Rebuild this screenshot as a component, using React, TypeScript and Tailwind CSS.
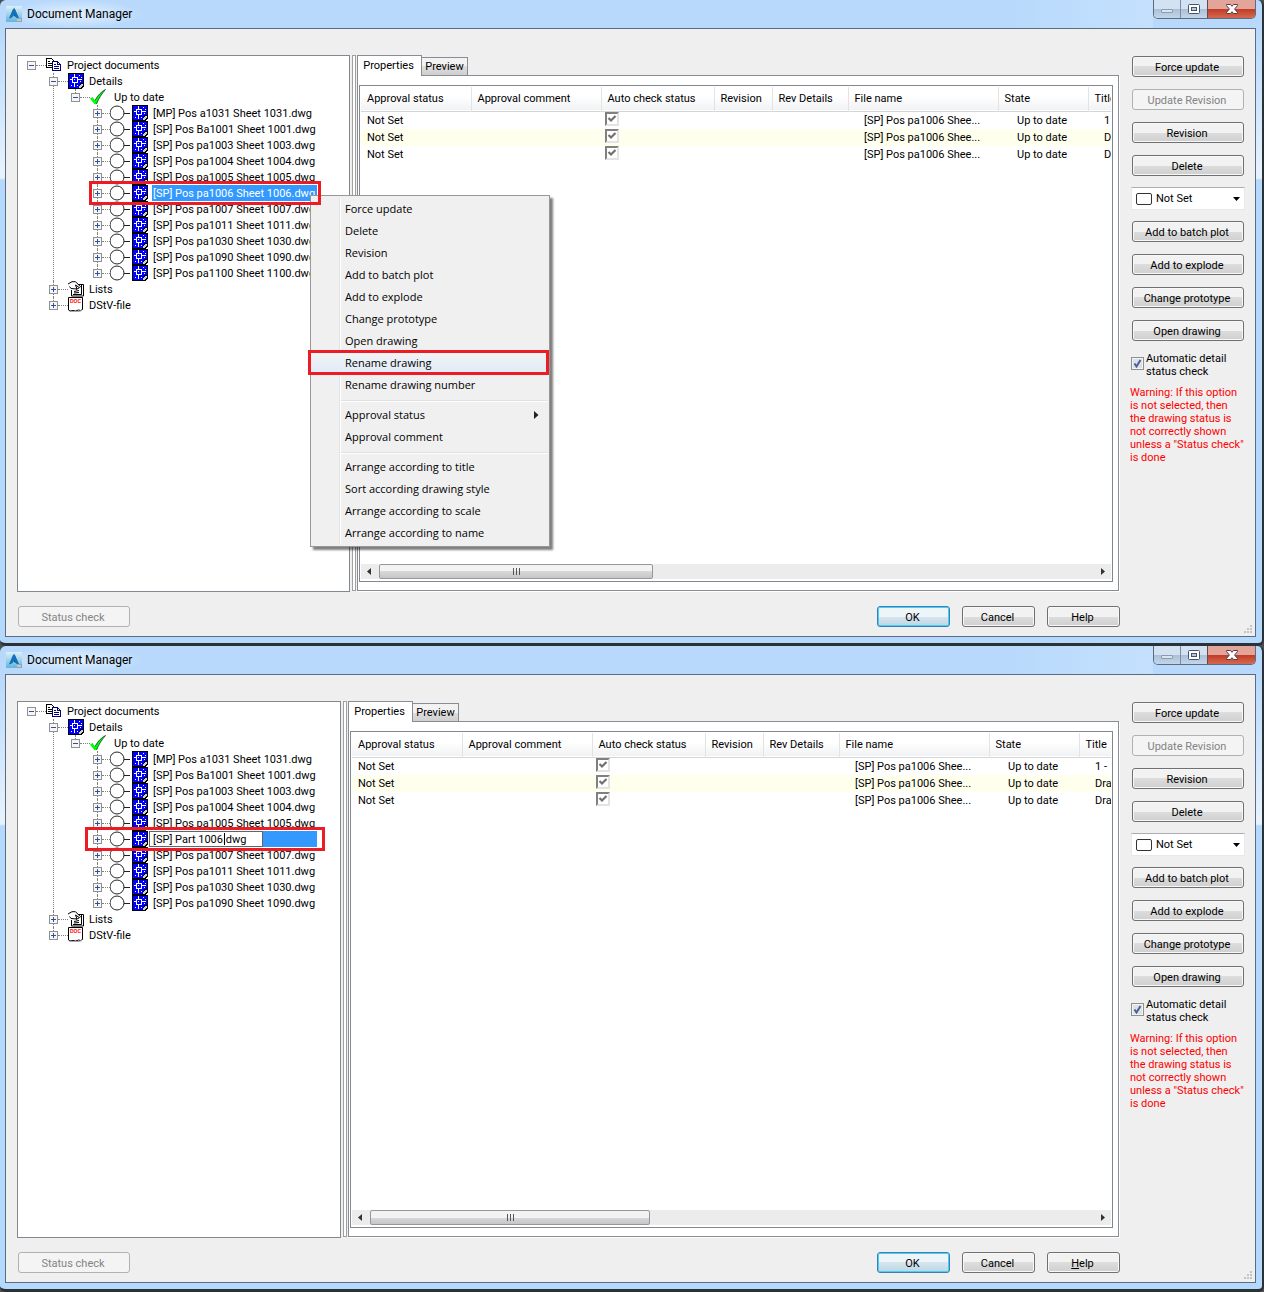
import type { ReactNode } from 'react';

/* ── Data ── */

const sheets = [
  '[MP] Pos a1031 Sheet 1031.dwg',
  '[SP] Pos Ba1001 Sheet 1001.dwg',
  '[SP] Pos pa1003 Sheet 1003.dwg',
  '[SP] Pos pa1004 Sheet 1004.dwg',
  '[SP] Pos pa1005 Sheet 1005.dwg',
  '[SP] Pos pa1006 Sheet 1006.dwg',
  '[SP] Pos pa1007 Sheet 1007.dwg',
  '[SP] Pos pa1011 Sheet 1011.dwg',
  '[SP] Pos pa1030 Sheet 1030.dwg',
  '[SP] Pos pa1090 Sheet 1090.dwg',
  '[SP] Pos pa1100 Sheet 1100.dwg',
];

const SELECTED = 5;

const menuGroups = [
  [
    'Force update',
    'Delete',
    'Revision',
    'Add to batch plot',
    'Add to explode',
    'Change prototype',
    'Open drawing',
    'Rename drawing',
    'Rename drawing number',
  ],
  ['Approval status', 'Approval comment'],
  [
    'Arrange according to title',
    'Sort according drawing style',
    'Arrange according to scale',
    'Arrange according to name',
  ],
];

const columns = [
  { label: 'Approval status', width: 'w-[110px]' },
  { label: 'Approval comment', width: 'w-[130px]' },
  { label: 'Auto check status', width: 'w-[113px]' },
  { label: 'Revision', width: 'w-[58px]' },
  { label: 'Rev Details', width: 'w-[76px]' },
  { label: 'File name', width: 'w-[150px]' },
  { label: 'State', width: 'w-[90px]' },
  { label: 'Title', width: '' },
];

const warning =
  'Warning: If this option\nis not selected, then\nthe drawing status is\nnot correctly shown\nunless a "Status check"\nis done';

/* ── Icons ── */

function AppIcon() {
  return (
    <svg width="16" height="16" viewBox="0 0 16 16" aria-hidden="true">
      <defs>
        <linearGradient id="app-bg" x1="0" y1="0" x2="0" y2="1">
          <stop offset="0" stopColor="#dff0f8" />
          <stop offset="1" stopColor="#62b4dc" />
        </linearGradient>
      </defs>
      <rect width="16" height="16" fill="url(#app-bg)" />
      <path d="M8 1.5 3 12.500 8 10Z" fill="#1f8fd0" />
      <path d="M8 1.5 13 12.500 8 10Z" fill="#0b5a9c" />
      <path d="M7 3h2l4 9.500-3-1-2-4-2 4-3 1Z" fill="#1272b8" />
      <rect x="11" y="12" width="5" height="4" fill="#8fa6b4" />
      <path d="M12 13v2M14 13v2" stroke="#fff" strokeWidth=".8" />
    </svg>
  );
}

function DrawingIcon() {
  return (
    <svg className="shrink-0" width="16" height="16" viewBox="0 0 16 16" shapeRendering="crispEdges" aria-hidden="true">
      <rect width="16" height="16" fill="#000" />
      <path d="M1 1h14v9h-3v2h-1v3H1Z" fill="#00f" />
      <path d="M4 4h6v6H4ZM5 5v4h4V5Z" fill="#fff" fillRule="evenodd" />
      <path d="M6 1h1v3H6ZM6 10h1v4H6ZM2 6h2v1H2ZM10 6h4v1h-4Z" fill="#fff" />
      <path d="M6 6h1v1H6ZM11 2h1v1h-1ZM13 4h1v1h-1ZM3 12h1v1H3ZM9 12h1v1H9ZM12 8h1v1h-1Z" fill="#fff" />
      <path d="M12 12h1v-1h2v1l-3 3h-1v-2h1Z" fill="#d0d0d0" />
      <path d="M15 14h1v2h-2v-1h1Z" fill="#fff" />
    </svg>
  );
}

function DocumentsIcon() {
  return (
    <svg className="shrink-0" width="16" height="16" viewBox="0 0 16 16" shapeRendering="crispEdges" aria-hidden="true">
      <path d="M.5 1.5h5l2 2v7h-7Z" fill="#fff" stroke="#000" />
      <path d="M2 4.500h2M2 6.500h4M2 8.500h4" stroke="#000" />
      <path d="M6.500 4.500h5l3 3v6h-8Z" fill="#fff" stroke="#00007b" />
      <path d="M11.500 4.500v3h3M8 7.500h2M8 9.500h5M8 11.500h5" fill="none" stroke="#00007b" />
    </svg>
  );
}

function CheckIcon() {
  return (
    <svg className="-mr-px shrink-0" width="20" height="16" viewBox="0 0 20 16" aria-hidden="true">
      <path d="M0 9.500 2.500 8 5 11.500C8 6 11 3 15.500.5 11.500 5 9 9 6.500 15L4.500 15.200Z" fill="#0f0" />
      <path d="M5 11.500C8 6 11 3 15.500.5 11.500 5 9 9 6.500 15" fill="none" stroke="#042" strokeWidth=".8" />
    </svg>
  );
}

function ListsIcon() {
  return (
    <svg className="shrink-0" width="16" height="16" viewBox="0 0 16 16" aria-hidden="true">
      <path d="M6 3.500h9.500v11.500H3.500V9" fill="#fff" stroke="#000" />
      <path d="M13.500 4v9.500M5 13.500h8.500" stroke="#000" fill="none" />
      <path d="M0 3 4 .7h3.500l5 5-1 1L7.500 4 9 8 3 7.500 1.500 5.500" fill="#fff" stroke="#000" />
      <path d="M8 8.500 11 7M6 10.500l5-1M6 12l5-.5" stroke="#000" />
    </svg>
  );
}

function DocIcon() {
  return (
    <svg className="shrink-0" width="16" height="16" viewBox="0 0 16 16" aria-hidden="true">
      <path d="M.5.5h14v12l-2 1-2-.5-3 1-2.500-.5-3 .5-1.500-1Z" fill="#fff" stroke="#000" />
      <path d="M3 14.500h8l3-1" fill="none" stroke="#aaa" />
      <text x="7.500" y="6" textAnchor="middle" fontSize="5" fontWeight="700" fill="#f00" fontFamily="Liberation Sans, sans-serif">
        DOC
      </text>
    </svg>
  );
}

function StatusIcon() {
  return (
    <svg className="shrink-0" width="22" height="16" viewBox="0 0 22 16" aria-hidden="true">
      <circle cx="7" cy="8" r="7" fill="#fff" stroke="#222" />
      <path d="M14 8.500h6" stroke="#222" />
    </svg>
  );
}

/* ── Small controls ── */

function PushButton({ children, disabled, primary }: { children: ReactNode; disabled?: boolean; primary?: boolean }) {
  const look = disabled
    ? 'border-[#adb2b5] bg-[#f4f4f4] text-[#838383]'
    : primary
      ? 'border-[#3c7fb1] bg-linear-to-b from-[#eef5f9] from-50% via-[#d5e6ef] via-50% to-[#bed5e3] shadow-[inset_0_0_0_1px_#46d0f8]'
      : 'border-[#707070] bg-linear-to-b from-[#f2f2f2] from-50% via-[#dddddd] via-50% to-[#cfcfcf] shadow-[inset_0_0_0_1px_#f8f8f8]';
  return (
    <button type="button" disabled={disabled} className={`h-[21px] w-full rounded-[3px] border pt-px pr-0.5 leading-none ${look}`}>
      {children}
    </button>
  );
}

function Expander({ open, label }: { open?: boolean; label: string }) {
  return (
    <button type="button" aria-label={`Toggle ${label}`} className="relative size-[9px] shrink-0">
      <svg width="9" height="9" viewBox="0 0 9 9" shapeRendering="crispEdges" aria-hidden="true">
        <rect x=".5" y=".5" width="8" height="8" fill="#f6f6f6" stroke="#919191" />
        <path d={open ? 'M2 4.500h5' : 'M2 4.500h5M4.500 2v5'} stroke="#33509c" />
      </svg>
    </button>
  );
}

function GridCheckbox({ label }: { label: string }) {
  return (
    <span className="mb-0.5 grid size-[14px]">
      <input
        type="checkbox"
        defaultChecked
        aria-label={label}
        className="col-start-1 row-start-1 size-[14px] appearance-none border-2 border-t-[#808080] border-r-[#e3e3e3] border-b-[#e3e3e3] border-l-[#808080] bg-white"
      />
      <svg className="pointer-events-none col-start-1 row-start-1" width="14" height="14" viewBox="0 0 14 14" aria-hidden="true">
        <path d="m3.500 6 2.500 2.500L10.500 4" fill="none" stroke="#707070" strokeWidth="2.200" />
      </svg>
    </span>
  );
}

/* ── Tree ── */

function TreeItem({ icon, label, open, root, children }: { icon: ReactNode; label: string; open?: boolean; root?: boolean; children?: ReactNode }) {
  const line = root
    ? ''
    : 'before:absolute before:top-0 before:left-1 before:h-full before:border-l before:border-dotted before:border-[#808080] last:before:h-2';
  return (
    <li className={`relative ${line}`}>
      <div className="flex h-4 items-center">
        <Expander open={open} label={label} />
        <span className="w-[10px] shrink-0 border-t border-dotted border-[#808080]" />
        {icon}
        <span className="mt-0.5 ml-[5px]">{label}</span>
      </div>
      {children && <ul className="pl-[22px]">{children}</ul>}
    </li>
  );
}

function SheetItem({ name, selected, renaming }: { name: string; selected: boolean; renaming: boolean }) {
  return (
    <li className="relative before:absolute before:top-0 before:left-1 before:h-full before:border-l before:border-dotted before:border-[#808080] last:before:h-2">
      <div className="relative flex h-4 w-max items-center">
        <Expander label={name} />
        <span className="w-2 shrink-0 border-t border-dotted border-[#808080]" />
        <StatusIcon />
        <DrawingIcon />
        {selected && renaming && (
          <div className="relative ml-px flex h-4 w-[168px] bg-[#3399ff]">
            <input
              aria-label="Drawing name"
              defaultValue="[SP] Part 1006.dwg"
              className="h-4 w-[114px] border border-[#646464] bg-white px-[3px] pt-px outline-none"
            />
            <span className="absolute top-0.5 left-[75px] h-3 w-px bg-black" />
          </div>
        )}
        {selected && !renaming && (
          <span className="ml-1 h-4 w-[165px] bg-[#3399ff] pt-px pl-px text-white">{name}</span>
        )}
        {!selected && <span className="mt-0.5 ml-[5px]">{name}</span>}
        {selected && (
          <span
            className={`pointer-events-none absolute -inset-y-1 z-20 border-3 border-[#ed1c24] ${renaming ? '-inset-x-2' : '-inset-x-1'}`}
          />
        )}
        {selected && !renaming && <ContextMenu />}
      </div>
    </li>
  );
}

function DocumentTree({ renaming }: { renaming: boolean }) {
  const visible = renaming ? sheets.slice(0, -1) : sheets;
  return (
    <nav
      aria-label="Project documents"
      className={`shrink-0 border border-[#828790] bg-white pt-px pl-[9px] whitespace-nowrap ${renaming ? 'w-[324px]' : 'w-[333px]'}`}
    >
      <ul>
        <TreeItem root open icon={<DocumentsIcon />} label="Project documents">
          <TreeItem open icon={<DrawingIcon />} label="Details">
            <TreeItem open icon={<CheckIcon />} label="Up to date">
              {visible.map((name, i) => (
                <SheetItem key={name} name={name} selected={i === SELECTED} renaming={renaming} />
              ))}
            </TreeItem>
          </TreeItem>
          <TreeItem icon={<ListsIcon />} label="Lists" />
          <TreeItem icon={<DocIcon />} label="DStV-file" />
        </TreeItem>
      </ul>
    </nav>
  );
}

function ContextMenu() {
  return (
    <div
      role="menu"
      className="absolute top-[10px] left-[217px] z-10 w-[240px] border border-[#979797] bg-[#f0f0f0] py-0.5 font-['Open_Sans',sans-serif] shadow-[3px_3px_2px_rgba(0,0,0,0.5)]"
    >
      <div className="ml-[28px] border-l border-[#e2e3e3] shadow-[inset_1px_0_0_#fff]">
        {menuGroups.map((group, g) => (
          <div key={group[0]}>
            {g > 0 && <hr className="mt-1 mr-0.5 mb-0.5 ml-px h-0.5 border-t border-b border-t-[#e0e0e0] border-b-white" />}
            {group.map((item) => {
              const active = item === 'Rename drawing';
              return (
                <div key={item} className="relative">
                  {active && (
                    <span className="absolute -top-0.5 -bottom-px right-0 -left-8 border-3 border-[#ed1c24] bg-linear-to-b from-[#f2f4f6] to-[#e2ebf7]" />
                  )}
                  <button type="button" role="menuitem" className="relative flex h-[22px] w-full items-center pr-[10px] pl-[5px]">
                    <span>{item}</span>
                    {item === 'Approval status' && (
                      <svg className="ml-auto" width="5" height="8" viewBox="0 0 5 8" aria-hidden="true">
                        <path d="M0 0v8l4.500-4Z" fill="#222" />
                      </svg>
                    )}
                  </button>
                </div>
              );
            })}
          </div>
        ))}
      </div>
    </div>
  );
}

/* ── Properties list ── */

function PropertiesPanel({ renaming }: { renaming: boolean }) {
  const titles = renaming ? ['1 -', 'Dra', 'Dra'] : ['1', 'D', 'D'];
  return (
    <section className="ml-px flex min-w-0 flex-1 flex-col pb-px">
      <div role="tablist" className="flex items-end">
        <button
          type="button"
          role="tab"
          aria-selected="true"
          className="relative -mb-px h-[21px] w-[65px] border border-b-0 border-[#898c95] bg-white pr-0.5 text-center"
        >
          Properties
        </button>
        <button
          type="button"
          role="tab"
          aria-selected="false"
          className="h-[18px] w-[46px] border border-b-0 border-l-0 border-[#898c95] bg-linear-to-b from-[#f2f2f2] from-50% via-[#dddddd] via-50% to-[#cfcfcf] pt-px text-center"
        >
          Preview
        </button>
      </div>
      <div className="flex flex-1 border border-[#898c95] bg-white px-[5px] pt-[9px] pb-2 pl-px shadow-[1px_1px_0_#fff]">
        <div className="flex min-w-0 flex-1 flex-col border border-[#828790] px-px pt-px pb-0.5">
          <div className="flex-1 overflow-hidden">
            <table className="w-full table-fixed border-collapse whitespace-nowrap">
              <colgroup>
                {columns.map((c) => (
                  <col key={c.label} className={c.width} />
                ))}
              </colgroup>
              <thead>
                <tr className="h-6 border-b border-[#d5d5d5] bg-linear-to-b from-white from-40% to-[#f1f2f4]">
                  {columns.map((c) => (
                    <th key={c.label} className="overflow-hidden border-r border-[#e2e3e6] p-0 pt-px pl-1.5 text-left font-normal last:border-r-0">
                      {c.label}
                    </th>
                  ))}
                </tr>
              </thead>
              <tbody>
                {titles.map((title, i) => (
                  <tr key={i} className="h-[17px] even:bg-[#ffffee]">
                    <td className="p-0 pt-px pl-1.5">Not Set</td>
                    <td className="p-0" />
                    <td className="p-0 pl-1">
                      <GridCheckbox label={`Auto check status, row ${i + 1}`} />
                    </td>
                    <td className="p-0" />
                    <td className="p-0" />
                    <td className="p-0 pt-px pl-4">[SP] Pos pa1006 Shee...</td>
                    <td className="p-0 pt-px pl-[19px]">Up to date</td>
                    <td className="overflow-hidden p-0 pt-px pl-4">{title}</td>
                  </tr>
                ))}
              </tbody>
            </table>
          </div>
          <div className="flex h-[15px] bg-[#ececec]">
            <button type="button" aria-label="Scroll left" className="flex w-[18px] items-center justify-center pr-0.5">
              <svg width="4" height="7" viewBox="0 0 4 7" aria-hidden="true">
                <path d="M4 0v7L0 3.500Z" fill="#333" />
              </svg>
            </button>
            <div
              className={`flex items-center justify-center gap-0.5 rounded-xs border border-[#979797] bg-linear-to-b from-[#f3f3f3] from-50% via-[#d8d8da] via-50% to-[#c6c6ca] ${renaming ? 'w-[280px]' : 'w-[274px]'}`}
            >
              <span className="h-[7px] w-px bg-[#555]" />
              <span className="h-[7px] w-px bg-[#555]" />
              <span className="h-[7px] w-px bg-[#555]" />
            </div>
            <button type="button" aria-label="Scroll right" className="ml-auto flex w-[18px] items-center justify-center pl-0.5">
              <svg width="4" height="7" viewBox="0 0 4 7" aria-hidden="true">
                <path d="M0 0v7l4-3.500Z" fill="#333" />
              </svg>
            </button>
          </div>
        </div>
      </div>
    </section>
  );
}

/* ── Right-hand actions ── */

function ActionColumn() {
  return (
    <aside className="ml-3 flex w-[114px] shrink-0 flex-col">
      <div className="flex flex-col gap-3 px-px pt-px">
        <PushButton>Force update</PushButton>
        <PushButton disabled>Update Revision</PushButton>
        <PushButton>Revision</PushButton>
        <PushButton>Delete</PushButton>
      </div>
      <div className="my-[11px] grid h-[23px] items-center border border-[#e3e9ef] border-t-[#abadb3] bg-white">
        <select aria-label="Approval status" className="col-start-1 row-start-1 h-[21px] w-full appearance-none pt-px pl-6">
          <option>Not Set</option>
        </select>
        <span className="pointer-events-none col-start-1 row-start-1 ml-1 h-3 w-4 rounded-xs border border-[#333] bg-white" />
        <svg className="pointer-events-none col-start-1 row-start-1 mr-1 justify-self-end" width="7" height="4" viewBox="0 0 7 4" aria-hidden="true">
          <path d="M0 0h7L3.500 4Z" fill="#000" />
        </svg>
      </div>
      <div className="flex flex-col gap-3 px-px">
        <PushButton>Add to batch plot</PushButton>
        <PushButton>Add to explode</PushButton>
        <PushButton>Change prototype</PushButton>
        <PushButton>Open drawing</PushButton>
      </div>
      <label className="mt-[11px] flex items-start gap-0.5 leading-[13px]">
        <span className="mt-[5px] grid size-[13px] shrink-0">
          <input
            type="checkbox"
            defaultChecked
            className="col-start-1 row-start-1 size-[13px] appearance-none border border-[#8e8f8f] bg-[#dde0e6] shadow-[inset_0_0_0_1px_#f4f4f4]"
          />
          <svg className="pointer-events-none col-start-1 row-start-1" width="13" height="13" viewBox="0 0 13 13" aria-hidden="true">
            <path d="m3.500 6.500 2 3L9.500 3" fill="none" stroke="#4a5f97" strokeWidth="2" />
          </svg>
        </span>
        <span>
          Automatic detail
          <br />
          status check
        </span>
      </label>
      <p className="mt-2 -ml-px leading-[13px] whitespace-pre text-[#ff0000]">{warning}</p>
    </aside>
  );
}

/* ── Window ── */

function WindowButtons() {
  return (
    <div className="flex h-[19px] w-[103px] overflow-hidden rounded-b-[5px] border border-t-0 border-[#5c6b80]">
      <button type="button" aria-label="Minimize" className="flex w-[27px] items-center justify-center border-r border-[#7b8da5] bg-linear-to-b from-[#d3e2f2] from-50% via-[#aabfd6] via-50% to-[#c3d6ea]">
        <span className="mt-1 h-1 w-3 rounded-[1px] border border-[#8b9bb0] bg-[#dbe5ef]" />
      </button>
      <button type="button" aria-label="Maximize" className="flex w-[27px] items-center justify-center border-r border-[#6d4550] bg-linear-to-b from-[#d3e2f2] from-50% via-[#aabfd6] via-50% to-[#c3d6ea]">
        <svg width="12" height="10" viewBox="0 0 12 10" aria-hidden="true">
          <rect x=".5" y=".5" width="11" height="9" rx="1" fill="#fff" stroke="#46536a" />
          <rect x="3.500" y="3.500" width="5" height="3" fill="#b5c9e0" stroke="#46536a" />
        </svg>
      </button>
      <button type="button" aria-label="Close" className="flex flex-1 items-center justify-center bg-linear-to-b from-[#e3a599] from-50% via-[#c03a25] via-50% to-[#d5684f]">
        <svg width="12" height="10" viewBox="0 0 12 10" aria-hidden="true">
          <path d="M.5.5h4L6 2.300 7.500.5h4v1L8.600 5l2.900 3.500v1h-4L6 7.700 4.500 9.500h-4v-1L3.400 5 .5 1.500Z" fill="#fff" stroke="#5a3a44" />
        </svg>
      </button>
    </div>
  );
}

function SizeGrip() {
  return (
    <svg className="absolute right-0.5 bottom-0.5" width="9" height="9" viewBox="0 0 9 9" shapeRendering="crispEdges" aria-hidden="true">
      <path d="M6 0h2v2H6ZM3 3h2v2H3ZM6 3h2v2H6ZM0 6h2v2H0ZM3 6h2v2H3ZM6 6h2v2H6Z" fill="#c4c4c4" />
    </svg>
  );
}

function DocumentManager({ renaming = false }: { renaming?: boolean }) {
  return (
    <section className="flex flex-col rounded-md border-r-2 border-b-3 border-[#2b3236] bg-[linear-gradient(#b8d9fc_28px,#e9f3fd_178px,#b5d8fd_180px)] pr-1.5 pb-[6px] pl-[5px]">
      <header className="flex h-7 items-start">
        <h1 className="flex h-7 items-center gap-[5px] bg-[radial-gradient(closest-side,#e4f1fe,#b8d9fc)] pr-3 pl-px text-xs">
          <AppIcon />
          Document Manager
        </h1>
        <div className="h-7 flex-1 bg-linear-to-r from-[#b8d9fc] from-85% to-[#c4e0fd]" />
        <WindowButtons />
      </header>
      <main className="relative flex flex-1 flex-col border border-[#5a6c82] bg-[#efefef] pt-[26px] pb-[9px]">
        <div className="flex flex-1 pr-[10px] pl-[11px]">
          <DocumentTree renaming={renaming} />
          <div className="mb-px ml-0.5 w-1 shrink-0 border border-[#a0a0a0] bg-white" />
          <PropertiesPanel renaming={renaming} />
          <ActionColumn />
        </div>
        <footer className="mt-[14px] flex gap-3 pr-[135px] pl-3">
          <div className="mr-auto w-28">
            <PushButton disabled>Status check</PushButton>
          </div>
          <div className="w-[73px]">
            <PushButton primary>OK</PushButton>
          </div>
          <div className="w-[73px]">
            <PushButton>Cancel</PushButton>
          </div>
          <div className="w-[73px]">
            <PushButton>{renaming ? <><u>H</u>elp</> : 'Help'}</PushButton>
          </div>
        </footer>
        <SizeGrip />
      </main>
    </section>
  );
}

export default function App() {
  return (
    <div className="grid min-h-screen grid-rows-2 bg-[#4a4f52] font-['Roboto',sans-serif] text-[11px] leading-4 text-black">
      <DocumentManager />
      <DocumentManager renaming />
    </div>
  );
}
